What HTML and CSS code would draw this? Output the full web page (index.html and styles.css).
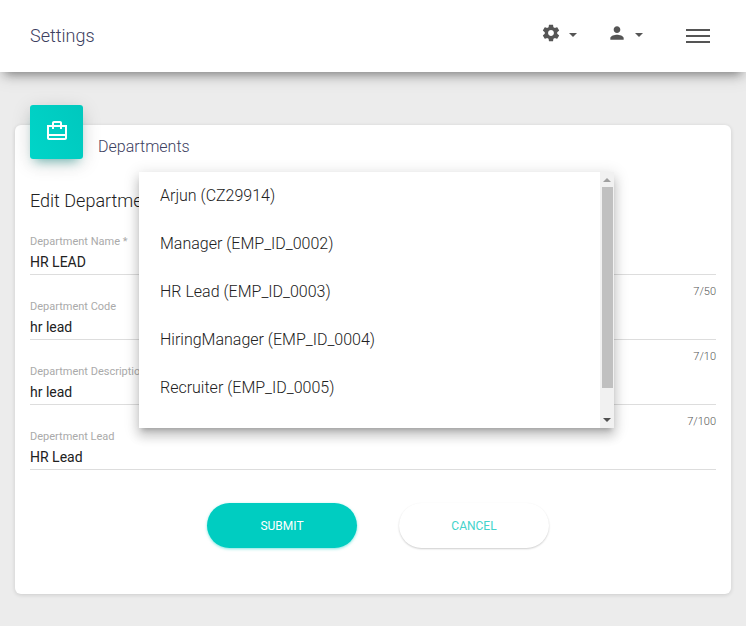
FILE: index.html
```html
<!DOCTYPE html>
<html lang="en">
<head>
<meta charset="utf-8">
<meta name="viewport" content="width=device-width, initial-scale=1">
<title>Settings</title>
<link rel="stylesheet" href="styles.css">
</head>
<body>
<header class="navbar">
  <a class="brand" href="#">Settings</a>
  <nav class="nav-actions">
    <button class="nav-button" type="button" aria-label="Settings menu">
      <svg class="nav-icon" viewBox="0 0 24 24"><path d="M19.43 12.98c.04-.32.07-.64.07-.98s-.03-.66-.07-.98l2.11-1.65c.19-.15.24-.42.12-.64l-2-3.46c-.12-.22-.39-.3-.61-.22l-2.49 1c-.52-.4-1.08-.73-1.69-.98l-.38-2.65C14.46 2.18 14.25 2 14 2h-4c-.25 0-.46.18-.49.42l-.38 2.65c-.61.25-1.17.59-1.69.98l-2.49-1c-.23-.09-.49 0-.61.22l-2 3.46c-.13.22-.07.49.12.64l2.11 1.65c-.04.32-.07.65-.07.98s.03.66.07.98l-2.11 1.65c-.19.15-.24.42-.12.64l2 3.46c.12.22.39.3.61.22l2.49-1c.52.4 1.08.73 1.69.98l.38 2.65c.03.24.24.42.49.42h4c.25 0 .46-.18.49-.42l.38-2.65c.61-.25 1.17-.59 1.69-.98l2.49 1c.23.09.49 0 .61-.22l2-3.46c.12-.22.07-.49-.12-.64l-2.11-1.65zM12 15.5c-1.93 0-3.5-1.57-3.5-3.5s1.57-3.5 3.5-3.5 3.5 1.57 3.5 3.5-1.57 3.5-3.5 3.5z"/></svg>
      <span class="caret"></span>
    </button>
    <button class="nav-button" type="button" aria-label="User menu">
      <svg class="nav-icon" viewBox="0 0 24 24"><path d="M12 12c2.21 0 4-1.79 4-4s-1.790-4-4-4-4 1.790-4 4 1.790 4 4 4zm0 2c-2.670 0-8 1.340-8 4v2h16v-2c0-2.660-5.330-4-8-4z"/></svg>
      <span class="caret"></span>
    </button>
    <button class="toggler" type="button" aria-label="Toggle navigation">
      <span class="bar"></span><span class="bar"></span><span class="bar"></span>
    </button>
  </nav>
</header>
<main class="content">
  <section class="card">
    <div class="card-header">
      <div class="card-icon">
        <svg viewBox="0 0 24 24"><path d="M17 6V4c0-1.110-.890-2-2-2H9c-1.110 0-2 .890-2 2v2H2v13c0 1.110.890 2 2 2h16c1.110 0 2-.890 2-2V6h-5zM9 4h6v2H9V4zm11 15H4v-2h16v2zm0-4H4V8h3v2h2V8h6v2h2V8h3v7z"/></svg>
      </div>
      <h1 class="card-title">Departments</h1>
    </div>
    <h2 class="form-title">Edit Department</h2>
    <form>
      <div class="field">
        <label for="name">Department Name *</label>
        <input id="name" type="text" value="HR LEAD">
        <span class="counter">7/50</span>
      </div>
      <div class="field">
        <label for="code">Department Code</label>
        <input id="code" type="text" value="hr lead">
        <span class="counter">7/10</span>
      </div>
      <div class="field">
        <label for="description">Department Description</label>
        <input id="description" type="text" value="hr lead">
        <span class="counter">7/100</span>
      </div>
      <div class="field">
        <label for="lead">Depertment Lead</label>
        <input id="lead" type="text" value="HR Lead">
      </div>
      <div class="actions">
        <button class="pill primary" type="submit">SUBMIT</button>
        <button class="pill" type="button">CANCEL</button>
      </div>
    </form>
    <div class="menu">
      <div class="options">
        <button class="option" type="button">Arjun (CZ29914)</button>
        <button class="option" type="button">Manager (EMP_ID_0002)</button>
        <button class="option" type="button">HR Lead (EMP_ID_0003)</button>
        <button class="option" type="button">HiringManager (EMP_ID_0004)</button>
        <button class="option" type="button">Recruiter (EMP_ID_0005)</button>
      </div>
      <div class="scrollbar">
        <span class="arrow up"></span>
        <span class="thumb"></span>
        <span class="arrow down"></span>
      </div>
    </div>
  </section>
</main>
</body>
</html>
```
FILE: styles.css
```css
* {
  box-sizing: border-box;
}

body {
  margin: 0;
  background: #ececec;
  color: #212121;
  font-family: Roboto, "Liberation Sans", sans-serif;
  font-weight: 300;
}

button,
input {
  font: inherit;
  border: 0;
  padding: 0;
  background: none;
}

.navbar {
  position: relative;
  display: flex;
  align-items: center;
  justify-content: space-between;
  height: 72px;
  padding: 0 36px 0 30px;
  background: #fff;
  box-shadow: 0 4px 18px rgba(0, 0, 0, .12), 0 7px 10px -5px rgba(0, 0, 0, .42);
}

.brand {
  color: #3c4060;
  font-size: 18px;
  line-height: 24px;
  text-decoration: none;
}

.nav-actions {
  display: flex;
  align-items: center;
}

.nav-button {
  display: flex;
  align-items: center;
  gap: 8px;
  margin-right: 30px;
  padding-bottom: 6px;
}

.nav-icon {
  width: 20px;
  height: 20px;
  fill: #555;
}

.caret {
  margin-top: 4px;
  border: 4px solid transparent;
  border-top-color: #555;
  border-bottom: 0;
}

.toggler {
  display: grid;
  gap: 4px;
  width: 24px;
  margin-left: 13px;
}

.bar {
  height: 2px;
  background: #555;
}

.content {
  padding: 53px 15px 32px;
}

.card {
  position: relative;
  padding: 0 15px 46px;
  border-radius: 6px;
  background: #fff;
  box-shadow: 0 1px 4px rgba(0, 0, 0, .14);
}

.card-header {
  display: flex;
  gap: 15px;
}

.card-icon {
  display: grid;
  place-items: center;
  width: 53px;
  height: 54px;
  margin-top: -20px;
  border-radius: 3px;
  background: linear-gradient(60deg, #00d5c8, #00c8be);
  box-shadow: 0 4px 20px rgba(0, 0, 0, .14), 0 7px 10px -5px rgba(0, 150, 140, .5);
}

.card-icon svg {
  width: 24px;
  height: 24px;
  margin-bottom: 2px;
  fill: #fff;
}

.card-title {
  margin: 10px 0 0;
  color: #3c4060;
  font-size: 16px;
  font-weight: 300;
  line-height: 24px;
}

.form-title {
  margin: 30px 0 22px;
  font-size: 18px;
  font-weight: 300;
  line-height: 24px;
}

.field {
  display: flex;
  flex-direction: column;
}

.field label {
  color: #aaa;
  font-size: 11px;
  font-weight: 400;
  line-height: 14px;
}

.field input {
  width: 100%;
  height: 26px;
  border-bottom: 1px solid #ddd;
  border-radius: 0;
  color: #212121;
  font-size: 14px;
  font-weight: 400;
}

.counter {
  align-self: flex-end;
  margin: 10px 0 1px;
  color: #555;
  font-size: 11px;
  line-height: 14px;
}

.actions {
  display: flex;
  justify-content: center;
  gap: 42px;
  margin-top: 33px;
  padding-left: 10px;
}

.pill {
  width: 150px;
  height: 45px;
  border-radius: 23px;
  color: #43d3cb;
  font-size: 12px;
  font-weight: 400;
  box-shadow: 0 1px 2px rgba(0, 0, 0, .2);
}

.primary {
  background: #00cdc1;
  color: #fff;
  box-shadow: 0 1px 3px rgba(0, 205, 193, .5);
}

.menu {
  position: absolute;
  top: 47px;
  right: 117px;
  left: 124px;
  display: flex;
  height: 256px;
  background: #fff;
  box-shadow: 0 5px 5px -3px rgba(0, 0, 0, .2), 0 8px 10px 1px rgba(0, 0, 0, .14), 0 3px 14px 2px rgba(0, 0, 0, .12);
}

.options {
  flex: 1;
  overflow: hidden;
}

.option {
  display: block;
  width: 100%;
  height: 48px;
  padding: 0 21px 2px;
  color: #212121;
  font-size: 16px;
  text-align: left;
}

.scrollbar {
  display: flex;
  flex-direction: column;
  align-items: center;
  width: 14px;
  padding: 6px 0;
  background: #f1f1f1;
}

.arrow {
  border: 4px solid transparent;
}

.up {
  border-top: 0;
  border-bottom-color: #a0a0a0;
}

.thumb {
  width: 11px;
  height: 201px;
  margin-top: 5px;
  background: #c0c0c0;
}

.down {
  margin-top: auto;
  border-bottom: 0;
  border-top-color: #505050;
}
```
